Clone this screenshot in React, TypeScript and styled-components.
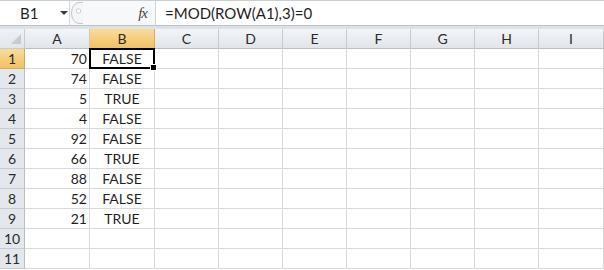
import styled, { createGlobalStyle } from 'styled-components';

const columns = ['A', 'B', 'C', 'D', 'E', 'F', 'G', 'H', 'I'];
const widths = [65, 65, 64, 64, 64, 64, 64, 64, 65];
const values: (number | null)[] = [70, 74, 5, 4, 92, 66, 88, 52, 21, null, null];

export default function App() {
  return (
    <>
      <GlobalStyle />
      <Window>
        <FormulaBar>
          <NameBox>
            <NameText>B1</NameText>
            <Arrow />
          </NameBox>
          <Grip>
            <svg width="14" height="24" viewBox="0 0 14 24">
              <path d="M13 1.5 H9 A7.5 10.5 0 0 0 9 22.5 H13" fill="#f4f5f7" stroke="#c3c7cc" />
              <circle cx="8.5" cy="10" r="2.2" fill="#fff" stroke="#c9cdd2" />
            </svg>
          </Grip>
          <FxArea>
            <Fx>fx</Fx>
          </FxArea>
          <FormulaInput>=MOD(ROW(A1),3)=0</FormulaInput>
        </FormulaBar>
        <Sheet>
          <Corner>
            <svg width="12" height="12" viewBox="0 0 12 12">
              <polygon points="11,1 11,11 1,11" fill="#c8ccd1" />
            </svg>
          </Corner>
          {columns.map((c, i) => (
            <ColHeader key={c} $active={i === 1} style={{ width: widths[i] }}>
              {c}
            </ColHeader>
          ))}
          {values.map((v, r) => {
            const row = r + 1;
            const bool = v === null ? '' : row % 3 === 0 ? 'TRUE' : 'FALSE';
            return [
              <RowHeader key={`h${row}`} $active={row === 1}>
                {row}
              </RowHeader>,
              ...columns.map((c, i) => (
                <Cell
                  key={`${c}${row}`}
                  $align={i === 0 ? 'right' : 'center'}
                  $selected={row === 1 && i === 1}
                >
                  {i === 0 && v !== null ? v : i === 1 ? bool : ''}
                  {row === 1 && i === 1 && <FillHandle />}
                </Cell>
              )),
            ];
          })}
        </Sheet>
      </Window>
    </>
  );
}

const GlobalStyle = createGlobalStyle`
  body {
    margin: 0;
    background: #ffffff;
    font-family: Lato, "Liberation Sans", sans-serif;
    color: #1f1f1f;
  }
`;
const Window = styled.div`
  width: 604px;
  height: 270px;
  overflow: hidden;
  background: #ffffff;
`;
const FormulaBar = styled.div`
  display: flex;
  height: 29px;
  box-sizing: border-box;
  border-top: 1px solid #c9ced5;
  border-bottom: 3px solid #dde2e8;
  background: #ffffff;
`;
const NameBox = styled.div`
  width: 70px;
  display: flex;
  align-items: center;
  border-right: 1px solid #d6dae0;
  border-bottom: 1px solid #b9c0c8;
  box-sizing: border-box;
  position: relative;
`;
const NameText = styled.span`
  margin-left: 20px;
  font-size: 15px;
`;
const Arrow = styled.span`
  margin-left: 22px;
  width: 0;
  height: 0;
  border-left: 4px solid transparent;
  border-right: 4px solid transparent;
  border-top: 4px solid #3c3c3c;
`;
const Grip = styled.div`
  width: 14px;
  display: flex;
  align-items: center;
  background: #f7f8f9;
  border-bottom: 1px solid #b9c0c8;
`;
const FxArea = styled.div`
  width: 71px;
  display: flex;
  align-items: center;
  justify-content: flex-end;
  padding-right: 8px;
  box-sizing: border-box;
  background: #f7f8f9;
  border-bottom: 1px solid #b9c0c8;
`;
const Fx = styled.span`
  font-family: "Liberation Serif", serif;
  font-style: italic;
  font-size: 15px;
  color: #444;
  letter-spacing: -1px;
`;
const FormulaInput = styled.div`
  flex: 1;
  display: flex;
  align-items: center;
  padding-left: 9px;
  font-size: 15px;
  border-left: 1px solid #cdd2d8;
  border-bottom: 1px solid #b9c0c8;
`;
const Sheet = styled.div`
  display: grid;
  grid-template-columns: 25px 65px 65px repeat(6, 64px) 65px;
  grid-auto-rows: 20px;
`;
const Corner = styled.div`
  display: flex;
  align-items: flex-end;
  justify-content: flex-end;
  padding: 0 2px 3px 0;
  box-sizing: border-box;
  background: linear-gradient(#eef1f4, #e2e6eb);
  border-right: 1px solid #c5cbd2;
  border-bottom: 1px solid #c5cbd2;
`;
const ColHeader = styled.div<{ $active: boolean }>`
  display: flex;
  align-items: center;
  justify-content: center;
  box-sizing: border-box;
  font-size: 14px;
  color: #2b2b2b;
  background: ${(p) =>
    p.$active ? 'linear-gradient(#f9dca0, #f1c15f)' : 'linear-gradient(#f3f5f7, #e1e5ea)'};
  border-right: 1px solid ${(p) => (p.$active ? '#e2a94a' : '#c5cbd2')};
  border-bottom: 1px solid ${(p) => (p.$active ? '#e2a94a' : '#b6bec8')};
`;
const RowHeader = styled.div<{ $active: boolean }>`
  display: flex;
  align-items: center;
  justify-content: center;
  box-sizing: border-box;
  font-size: 14px;
  color: #2b2b2b;
  background: ${(p) => (p.$active ? 'linear-gradient(#f9dca0, #f1c15f)' : '#e4e8ed')};
  border-right: 1px solid ${(p) => (p.$active ? '#e2a94a' : '#b6bec8')};
  border-bottom: 1px solid ${(p) => (p.$active ? '#e2a94a' : '#c5cbd2')};
`;
const Cell = styled.div<{ $align: 'right' | 'center'; $selected: boolean }>`
  position: relative;
  display: flex;
  align-items: center;
  justify-content: ${(p) => (p.$align === 'right' ? 'flex-end' : 'center')};
  padding: 0 2px;
  box-sizing: border-box;
  font-size: 14px;
  color: #1f1f1f;
  border-right: 1px solid #d9d9d9;
  border-bottom: 1px solid #d9d9d9;
  ${(p) =>
    p.$selected &&
    `
    &::after {
      content: '';
      position: absolute;
      left: -1px;
      top: -1px;
      right: -1px;
      bottom: -1px;
      border: 2px solid #000;
    }
  `}
`;
const FillHandle = styled.span`
  position: absolute;
  right: -3px;
  bottom: -3px;
  width: 5px;
  height: 5px;
  background: #000;
  border: 1px solid #fff;
  z-index: 2;
`;
